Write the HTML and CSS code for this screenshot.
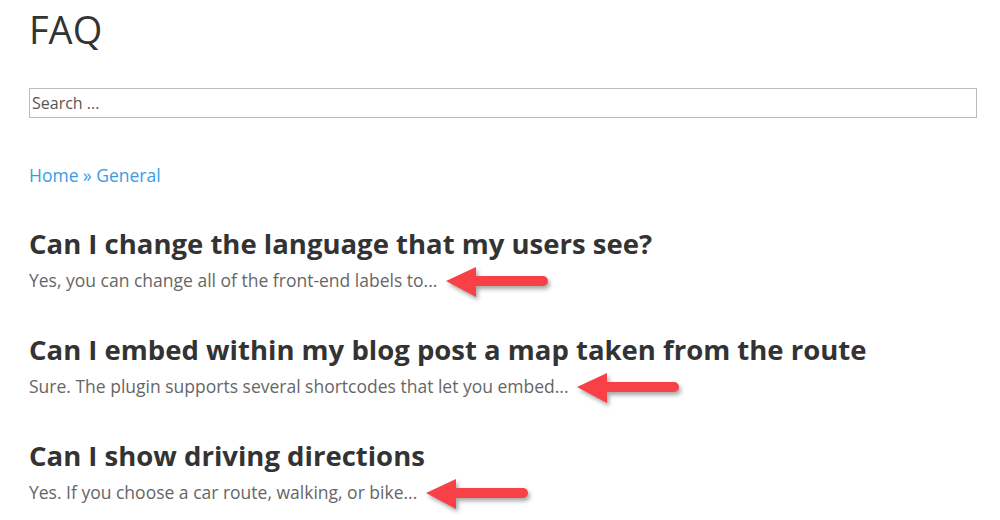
FILE: index.html
```html
<!DOCTYPE html>
<html lang="en">
<head>
    <meta charset="UTF-8">
    <title>FAQ</title>
    <link rel="stylesheet" href="styles.css">
</head>
<body>
<div class="page">
    <h1 class="page-title">FAQ</h1>

    <form class="search-form">
        <input type="search" class="search-field" placeholder="Search ...">
    </form>

    <div class="breadcrumbs">
        <a href="#">Home</a> &raquo; <a href="#">General</a>
    </div>

    <div class="faq-list">
        <div class="faq-item">
            <h2>Can I change the language that my users see?</h2>
            <p>Yes, you can change all of the front-end labels to...
                <svg class="arrow" width="110" height="36" viewBox="0 0 110 36"><path d="M4 17 L34 3 L34 12 L101 12 A5 5 0 0 1 101 22 L34 22 L34 33 Z"/></svg>
            </p>
        </div>
        <div class="faq-item">
            <h2>Can I embed within my blog post a map taken from the route</h2>
            <p>Sure. The plugin supports several shortcodes that let you embed...
                <svg class="arrow" width="110" height="36" viewBox="0 0 110 36"><path d="M4 17 L34 3 L34 12 L101 12 A5 5 0 0 1 101 22 L34 22 L34 33 Z"/></svg>
            </p>
        </div>
        <div class="faq-item">
            <h2>Can I show driving directions</h2>
            <p>Yes. If you choose a car route, walking, or bike...
                <svg class="arrow" width="110" height="36" viewBox="0 0 110 36"><path d="M4 17 L34 3 L34 12 L101 12 A5 5 0 0 1 101 22 L34 22 L34 33 Z"/></svg>
            </p>
        </div>
    </div>
</div>
</body>
</html>
```

FILE: styles.css
```css
body {
    margin: 0;
    background: #fff;
    font-family: "Open Sans", sans-serif;
    color: #333;
}
.page {
    width: 948px;
    padding: 0 0 0 29px;
}
.page-title {
    font-size: 38px;
    font-weight: 400;
    line-height: 46px;
    margin: 6px 0 0 0;
}
.search-form {
    margin-top: 36px;
}
.search-field {
    box-sizing: border-box;
    width: 100%;
    height: 30px;
    border: 1px solid #bbb;
    padding: 0 2px;
    font-family: "Open Sans", sans-serif;
    font-size: 16px;
    color: #333;
    outline: none;
}
.search-field::placeholder {
    color: #555;
}
.breadcrumbs {
    margin-top: 45px;
    font-size: 17.5px;
    line-height: 24px;
    color: #3a9be6;
}
.breadcrumbs a {
    color: #3a9be6;
    text-decoration: none;
}
.faq-list {
    margin-top: 36px;
}
.faq-item {
    margin-bottom: 29px;
}
.faq-item h2 {
    font-size: 27.5px;
    font-weight: 700;
    line-height: 41px;
    margin: 0;
}
.faq-item p {
    margin: 0;
    font-size: 17.5px;
    line-height: 30px;
    color: #666;
}
.arrow {
    vertical-align: middle;
    margin-left: 0;
    fill: #f84147;
    filter: drop-shadow(2px 3px 2px rgba(0, 0, 0, 0.35));
}
```
